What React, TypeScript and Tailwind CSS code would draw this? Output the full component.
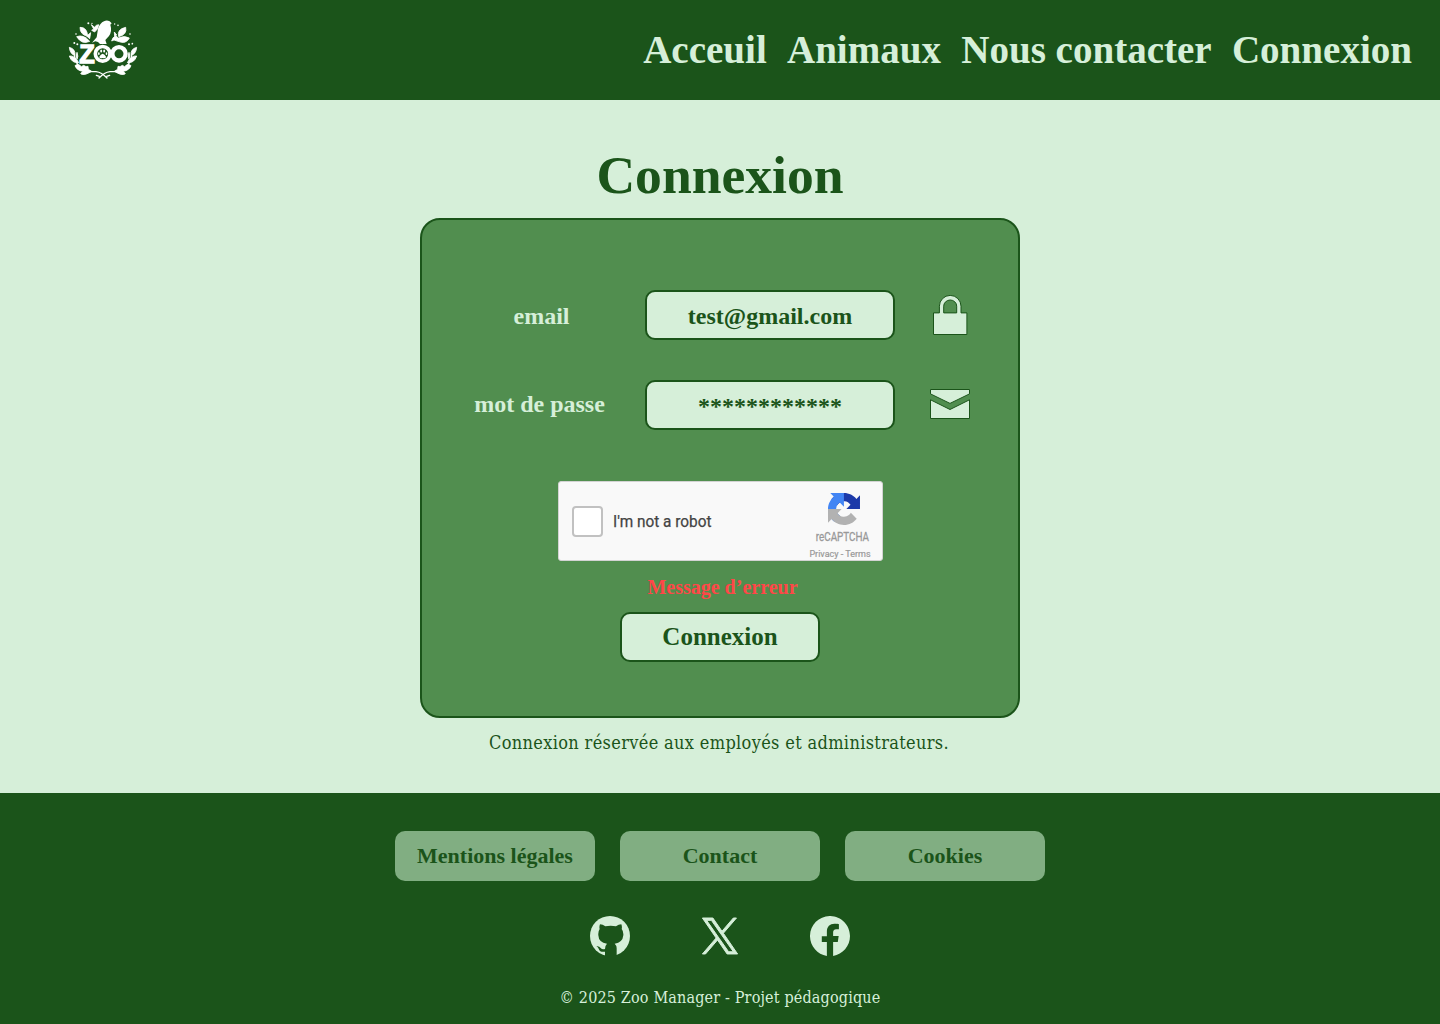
import React from "react";
import { BsFacebook } from "react-icons/bs";

const navItems = ["Acceuil", "Animaux", "Nous contacter", "Connexion"];
const footerLinks = ["Mentions légales", "Contact", "Cookies"];

function Logo() {
  return (
    <svg viewBox="0 0 270 240" className="h-[80px] w-[90px]" fill="#fff" aria-label="Zoo">
      {/* bird */}
      <path d="M102 98 L116 82 L120 56 Q126 39 138 34 Q146 29 155 34 L161 40 L157 44 Q163 63 153 78 L142 90 L146 102 L126 102 L120 96 L112 94 Z" />
      <g stroke="#fff" strokeWidth="2.5" strokeLinejoin="round">
        {/* small flying bird */}
        <path d="M100 44 L110 52 Q113 44 122 44 L119 56 L110 66 L101 61 L107 57 Z" />
        {/* upper leaves */}
        <path d="M66 52 Q88 52 89 79 Q66 74 66 52Z" />
        <path d="M56 80 Q76 72 95 94 Q72 105 56 80Z" />
        <path d="M86 78 L98 68 L95 86Z" />
        <path d="M203 52 Q208 74 182 80 Q176 58 203 52Z" />
        <path d="M161 93 Q163 81 174 78 L181 84 Q200 75 214 84 Q204 104 180 94 L168 90 Z" />
        <path d="M169 66 L176 75 L170 80Z" />
        {/* side leaves */}
        <path d="M34 112 Q53 117 51 136 Q36 133 34 112Z" />
        <path d="M34 138 Q51 136 62 158 Q41 160 34 138Z" />
        <path d="M57 127 Q62 140 57 148 Q52 137 57 127Z" />
        <path d="M236 112 Q217 117 219 136 Q234 133 236 112Z" />
        <path d="M236 138 Q219 136 208 158 Q229 160 236 138Z" />
        <path d="M213 127 Q208 140 213 148 Q218 137 213 127Z" />
        {/* lower garland */}
        <path d="M51 167 Q61 159 70 170 L77 166 L84 170 L90 169 L91 178 L101 184 L92 189 Q76 197 68 191 L74 184 Q56 181 51 167Z" />
        <path d="M219 167 Q209 159 200 170 L193 166 L186 170 L180 169 L179 178 L169 184 L178 189 Q194 197 202 191 L196 184 Q214 181 219 167Z" />
      </g>
      <g fill="none" stroke="#fff" strokeWidth="4" strokeLinecap="round">
        <path d="M48 130 Q52 169 83 185 H114 Q131 187 147 204" />
        <path d="M222 130 Q218 169 187 185 H156 Q139 187 123 204" />
        <path d="M115 196 L124 199 M155 196 L146 199" />
      </g>
      <circle cx="91" cy="40" r="3" />
      <circle cx="102" cy="40" r="2" />
      <circle cx="54" cy="72" r="2.5" />
      <circle cx="49" cy="99" r="3" />
      <circle cx="58" cy="103" r="3" />
      <circle cx="180" cy="46" r="2.5" />
      <circle cx="170" cy="42" r="2" />
      <circle cx="216" cy="72" r="2.5" />
      <circle cx="213" cy="103" r="3" />
      <circle cx="223" cy="101" r="2.5" />
      {/* lettering */}
      <text x="64" y="158" fontFamily="Liberation Sans, sans-serif" fontWeight="700" fontSize="76" stroke="#fff" strokeWidth="4">
        Z
      </text>
      <circle cx="183" cy="131.5" r="20" fill="#1b541a" stroke="#fff" strokeWidth="13" />
      <circle cx="134" cy="131.5" r="22" fill="#1b541a" stroke="#fff" strokeWidth="11" />
      {/* paw */}
      <path d="M134 131 Q140 132 144 140 Q144 147 134 144 Q124 147 124 140 Q128 132 134 131Z" />
      <ellipse cx="129.5" cy="123" rx="3" ry="4.5" />
      <ellipse cx="138.5" cy="123" rx="3" ry="4.5" />
      <ellipse cx="122.5" cy="131" rx="2.5" ry="4" />
      <ellipse cx="145.5" cy="131" rx="2.5" ry="4" />
    </svg>
  );
}

function LockIcon() {
  return (
    <svg viewBox="0 0 40 40" className="h-10 w-10" fill="#d6efd9" stroke="#1b541a">
      <path d="M3.5 17.9H9.4V11.2A10.8 10.8 0 0 1 31 11.2V17.9H36.9V39.5H3.5ZM13.7 17.9H26.7V11.2A6.5 6.2 0 0 0 13.7 11.2Z" fillRule="evenodd" />
    </svg>
  );
}

function EnvelopeIcon() {
  return (
    <svg viewBox="0 0 40 30" className="mb-[2px] h-[30px] w-10" fill="#d6efd9" stroke="#1b541a">
      <path d="M.5.5H39.5V4.9L20 14.4.5 4.9Z" />
      <path d="M.5 10.8L20 20.5 39.5 10.8V29.5H.5Z" />
    </svg>
  );
}

function GithubIcon() {
  return (
    <svg viewBox="12 12 120 120" className="h-10 w-10">
      <circle cx="72" cy="72" r="60" fill="#d6efd9" />
      <path
        fill="#1b541a"
        d="M42 37Q50 37 58 43Q74 39 90 43Q98 37 106 37Q109 44 107 51Q113 58 112 70Q110 92 86 95Q92 100 92 109V133H57V119Q42 122 38 110Q36 105 31 103Q39 101 44 108Q49 114 57 111Q58 99 63 95Q38 92 37 70Q36 58 41 51Q39 44 42 37Z"
      />
    </svg>
  );
}

function XIcon() {
  return (
    <svg viewBox="0 0 1200 1227" className="h-10 w-10 overflow-visible py-[2px]" fill="currentColor" stroke="currentColor" strokeWidth="34">
      <path d="M714.163 519.284L1160.89 0H1055.03L667.137 450.887L357.328 0H0L468.492 681.821L0 1226.37H105.866L515.491 750.218L842.672 1226.37H1200L714.137 519.284H714.163ZM569.165 687.828L521.697 619.934L144.011 79.6944H306.615L611.412 515.685L658.88 583.579L1055.08 1150.3H892.476L569.165 687.854V687.828Z" />
    </svg>
  );
}

function Captcha() {
  return (
    <div className="flex h-20 w-[325px] rounded-[3px] border border-[#d3d3d3] bg-[#f9f9f9] font-['Roboto',sans-serif] font-normal">
      <div className="ml-[13px] mt-6 h-[31px] w-[31px] rounded-[4px] border-2 border-[#c1c1c1] bg-white" />
      <div className="ml-[10px] mt-[30px] h-5 w-[100px] whitespace-nowrap text-[16px] leading-5 text-[#444]">
        <span className="inline-block origin-left scale-x-[0.96] [-webkit-text-stroke:0.25px_#444]">I&apos;m not a robot</span>
      </div>
      <div className="ml-auto mr-[6px] flex w-[66px] flex-col items-center pt-[11px] text-[#999]">
        <svg viewBox="0 0 64 64" className="ml-[3px] h-8 w-8 shrink-0">
          <path fill="#1c3aa9" d="M64 31.955l-.033-1.37V4.687l-7.16 7.16C50.948 4.674 42.033.093 32.05.093c-10.4 0-19.622 4.96-25.458 12.64l11.736 11.86a15.55 15.55 0 0 1 4.754-5.334c2.05-1.6 4.952-2.906 8.968-2.906.485 0 .86.057 1.135.163 4.976.393 9.288 3.14 11.828 7.124l-8.307 8.307L64 31.953" />
          <path fill="#4285f4" d="M31.862.094l-1.37.033H4.594l7.16 7.16C4.58 13.147 0 22.06 0 32.046c0 10.4 4.96 19.622 12.64 25.458L24.5 45.768a15.55 15.55 0 0 1-5.334-4.754c-1.6-2.05-2.906-4.952-2.906-8.968 0-.485.057-.86.163-1.135.393-4.976 3.14-9.288 7.124-11.828l8.307 8.307L31.86.095" />
          <path fill="#b2b2b2" d="M.001 32.045l.033 1.37v25.898l7.16-7.16c5.86 7.173 14.774 11.754 24.76 11.754 10.4 0 19.622-4.96 25.458-12.64l-11.736-11.86a15.55 15.55 0 0 1-4.754 5.334c-2.05 1.6-4.952 2.906-8.968 2.906-.485 0-.86-.057-1.135-.163-4.976-.393-9.288-3.14-11.828-7.124l8.307-8.307c-10.522.04-22.4.066-27.295-.005" />
        </svg>
        <div className="mt-[5px] h-[14px] scale-x-[0.82] whitespace-nowrap text-[12px] leading-[14px] [-webkit-text-stroke:0.3px_#999]">reCAPTCHA</div>
        <div className="mr-[5px] mt-[4px] whitespace-nowrap text-[9px] leading-3 [-webkit-text-stroke:0.2px_#999]">Privacy - Terms</div>
      </div>
    </div>
  );
}

type FieldProps = {
  label: string;
  value: string;
  icon: React.ReactNode;
  labelClass: string;
  valueClass: string;
};

function Field({ label, value, icon, labelClass, valueClass }: FieldProps) {
  return (
    <div className="flex h-[50px] items-center text-[24px]">
      <div className={`w-[223px] text-center text-[#d6efd9] ${labelClass}`}>{label}</div>
      <div className={`flex h-[50px] w-[250px] shrink-0 items-center justify-center rounded-[10px] border-2 border-[#1b541a] bg-[#d6efd9] text-[#1b541a] ${valueClass}`}>
        {value}
      </div>
      <div className="ml-[35px] shrink-0">{icon}</div>
    </div>
  );
}

export default function App() {
  return (
    <div className="flex h-[1024px] w-[1440px] flex-col overflow-hidden bg-[#d6efd9] font-['Liberation_Serif',serif] font-bold text-[#1b541a]">
      <header className="flex h-[100px] shrink-0 items-center justify-between bg-[#1b541a] pl-[58px] pr-[28px]">
        <Logo />
        <nav className="flex gap-[20.2px] whitespace-nowrap text-[39.06px] leading-[50px] text-[#d6efd9]">
          {navItems.map((item) => (
            <a key={item}>{item}</a>
          ))}
        </nav>
      </header>

      <main className="flex h-[693px] shrink-0 flex-col items-center pt-[44px]">
        <h1 className="h-[74px] whitespace-nowrap text-[53.6px] leading-[62px]">Connexion</h1>
        <section className="flex h-[500px] w-[600px] shrink-0 flex-col rounded-[20px] border-2 border-[#1b541a] bg-[#518e4f] pt-[70px]">
          <div className="flex flex-col gap-10">
            <Field label="email" value="test@gmail.com" icon={<LockIcon />} labelClass="pl-[16px] pt-[2px]" valueClass="pt-[2px]" />
            <Field label="mot de passe" value="************" icon={<EnvelopeIcon />} labelClass="pl-[12px] pb-[2px]" valueClass="pt-[1px]" />
          </div>
          <div className="mt-[51px] flex flex-col items-center">
            <Captcha />
            <p className="ml-[5px] mt-[12px] h-[28px] text-[20px] leading-7 text-[#ff4747]">Message d’erreur</p>
            <button className="mt-[11px] h-[50px] w-[200px] rounded-[10px] border-2 border-[#1b541a] bg-[#d6efd9] text-[25px]">
              Connexion
            </button>
          </div>
        </section>
        <p className="mr-[2px] mt-[12px] whitespace-nowrap font-['DejaVu_Serif_Condensed','DejaVu_Serif',serif] text-[18px] font-normal leading-[26px] tracking-[0.34px]">
          Connexion réservée aux employés et administrateurs.
        </p>
      </main>

      <footer className="flex grow flex-col items-center bg-[#1b541a] pt-[38px]">
        <div className="flex gap-[25px]">
          {footerLinks.map((link) => (
            <a key={link} className="flex h-[50px] w-[200px] items-center justify-center rounded-[10px] bg-[#81ae82] pb-[2px] text-[22px]">
              {link}
            </a>
          ))}
        </div>
        <div className="mt-[35px] flex gap-[70px] text-[40px] text-[#d6efd9]">
          <GithubIcon />
          <XIcon />
          <BsFacebook />
        </div>
        <p className="mt-[30px] whitespace-nowrap font-['DejaVu_Serif_Condensed','DejaVu_Serif',serif] text-[16px] font-normal leading-6 tracking-[0.16px] text-[#d6efd9]">
          © 2025 Zoo Manager - Projet pédagogique
        </p>
      </footer>
    </div>
  );
}
